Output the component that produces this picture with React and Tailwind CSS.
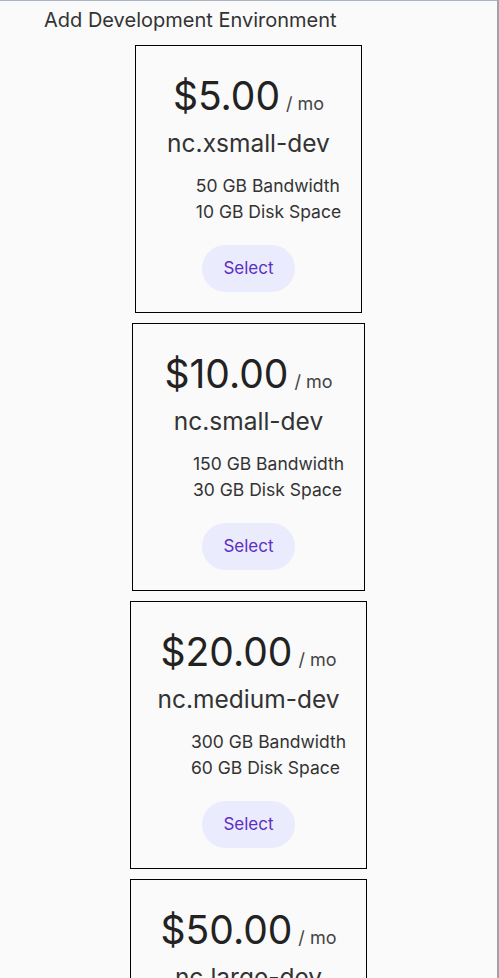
import React from 'react';

const plans = [
  { price: '$5.00', name: 'nc.xsmall-dev', bandwidth: '50 GB Bandwidth', disk: '10 GB Disk Space' },
  { price: '$10.00', name: 'nc.small-dev', bandwidth: '150 GB Bandwidth', disk: '30 GB Disk Space' },
  { price: '$20.00', name: 'nc.medium-dev', bandwidth: '300 GB Bandwidth', disk: '60 GB Disk Space' },
  { price: '$50.00', name: 'nc.large-dev', bandwidth: '600 GB Bandwidth', disk: '80 GB Disk Space' },
];

const PlanCard = ({ plan }) => {
  return (
    <div className="w-fit border border-black p-5 flex flex-col">
      <div className="mt-[7px] flex items-baseline justify-center text-[#222]">
        <span className="text-[39px] leading-[46px]">{plan.price}</span>
        <span className="ml-[6px] text-[18px] text-[#444]">/ mo</span>
      </div>
      <p className="mt-[10px] text-center text-[24.5px] leading-[29px] text-[#333]">{plan.name}</p>
      <ul className="mt-[15px] pl-10 text-[17.5px] leading-[26px] text-[#333]">
        <li>{plan.bandwidth}</li>
        <li>{plan.disk}</li>
      </ul>
      <div className="mt-5 flex justify-center">
        <button className="h-[47px] px-[21px] rounded-full bg-[#ebebfe] text-[17px] text-[#5b2fc1]">
          Select
        </button>
      </div>
    </div>
  );
};

const App = () => {
  return (
    <div
      className="h-screen overflow-hidden bg-[#fafafa] border-t border-t-[#a9b5c2] border-r-2 border-r-[#a0a4aa]"
      style={{ fontFamily: 'Inter, "Noto Sans", sans-serif' }}
    >
      <h1 className="pl-[44px] pt-[7px] text-[20px] leading-[24px] text-[#333]">Add Development Environment</h1>
      <div className="mt-[13px] flex flex-col items-center gap-[10px]">
        {plans.map((plan) => (
          <PlanCard key={plan.name} plan={plan} />
        ))}
      </div>
    </div>
  );
};

export default App;
